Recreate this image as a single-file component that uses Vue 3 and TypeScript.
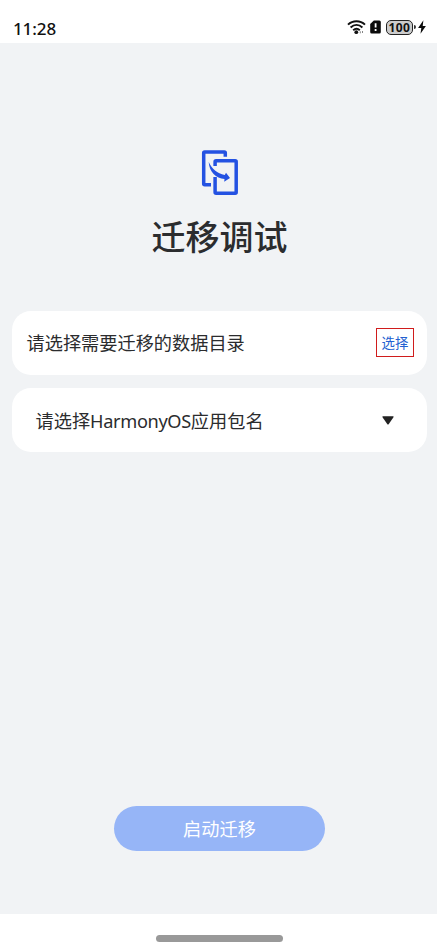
<script setup lang="ts">
import { ref } from 'vue'

const time = ref('11:28')
const battery = ref(100)
</script>

<template>
  <div class="screen">
    <header class="status">
      <span class="time">{{ time }}</span>
      <div class="indicators">
        <svg class="wifi" width="19" height="16" viewBox="0 0 19 16">
          <g fill="none" stroke="#111" stroke-width="2">
            <path d="M1 5.6C5.8 1 13.200 1 18 5.600" />
            <path d="M3.600 8.500C7.200 5.200 11.800 5.200 15.400 8.500" />
            <path d="M6.200 11.200C8.300 9.400 10.700 9.400 12.800 11.200" />
          </g>
          <circle cx="9.300" cy="13.200" r="1.900" fill="#111" />
          <path d="M13.300 12.300v2M15.500 12v2" stroke="#777" stroke-width="0.900" />
        </svg>
        <svg class="sim" width="11" height="14" viewBox="0 0 11 14">
          <path d="M3.800 .5H9.300Q10.800.5 10.800 2V12Q10.800 13.500 9.300 13.500H1.700Q.2 13.500.2 12V4Z" fill="#0b0b0b" />
          <path d="M5.600 3.200V7.600M5.600 9.100V10.900" stroke="#fff" stroke-width="1.800" />
        </svg>
        <span class="battery">{{ battery }}</span>
        <i class="nub"></i>
        <svg class="bolt" width="8" height="14" viewBox="0 0 8 14">
          <path d="M5.400.3.100 7.900H3.300L2.500 13.700 7.900 5.900H4.700Z" fill="#0b0b0b" />
        </svg>
      </div>
    </header>

    <main class="content">
      <svg class="logo" width="40" height="50" viewBox="0 0 40 50">
        <g fill="none" stroke="#2452e2" stroke-width="3.500">
          <path d="M25.300 8.800V4.900Q25.300 3.900 24.300 3.900H4.700Q3.700 3.900 3.700 4.900V35.800Q3.700 36.800 4.700 36.800H11" />
          <path d="M15.100 18V13.800Q15.100 12.800 16.100 12.800H35.200Q36.200 12.800 36.200 13.800V44.200Q36.200 45.200 35.200 45.200H16.100Q15.100 45.200 15.100 44.200V29" />
        </g>
        <path d="M8.700 14C12 20.800 17 25.500 24.800 27.100L26 24.700 30 29.900 24.200 33.800 24.500 31.100C16 30.300 9.200 24 8.700 14Z" fill="#2452e2" />
      </svg>
      <h1 class="title">迁移调试</h1>
      <section class="card">
        <span class="label">请选择需要迁移的数据目录</span>
        <button class="pick" type="button">选择</button>
      </section>
      <section class="card dropdown">
        <span class="label">请选择<span class="latin">HarmonyOS</span>应用包名</span>
        <svg class="caret" width="12" height="9" viewBox="0 0 12 9">
          <path d="M1 .3H11Q12.200 .3 11.500 1.300L6.800 8Q6 9 5.200 8L.5 1.300Q-.2 .3 1 .3Z" fill="#222" />
        </svg>
      </section>
      <button class="start" type="button">启动迁移</button>
    </main>

    <footer class="nav"><i class="handle"></i></footer>
  </div>
</template>

<style>
body {
  margin: 0;
}
</style>

<style scoped>
.screen {
  display: flex;
  flex-direction: column;
  width: 437px;
  height: 948px;
  background: #fff;
  color: #2b2c2e;
  font-family: "Noto Sans", "Noto Sans CJK SC", sans-serif;
}
.status {
  display: flex;
  justify-content: space-between;
  box-sizing: border-box;
  height: 43px;
  padding: 18px 11px 0 13px;
}
.time {
  font: 500 17px/22px "Noto Sans", sans-serif;
  letter-spacing: -0.1px;
  color: #111;
}
.indicators {
  display: flex;
  align-items: center;
  height: 18px;
}
.sim {
  margin-left: 4px;
}
.battery {
  box-sizing: border-box;
  width: 27px;
  height: 15px;
  margin-left: 5px;
  border: 1.5px solid #222;
  border-radius: 5px;
  background: #ccc;
  color: #111;
  font: 700 12px/13px "Noto Sans", sans-serif;
  letter-spacing: 0.4px;
  text-align: center;
}
.nub {
  width: 2px;
  height: 4px;
  margin-left: 1px;
  border-radius: 0 2px 2px 0;
  background: #333;
}
.bolt {
  margin-left: 2px;
}
.content {
  display: flex;
  flex-direction: column;
  align-items: center;
  box-sizing: border-box;
  height: 871px;
  padding: 105px 10px 63px 12px;
  background: #f1f3f5;
}
.logo {
  flex: none;
}
.title {
  margin: 14px 0 49px;
  font-size: 34px;
  font-weight: 500;
  line-height: 50px;
}
.card {
  display: flex;
  align-items: center;
  justify-content: space-between;
  box-sizing: border-box;
  width: 100%;
  height: 64px;
  padding: 0 13px 0 14.5px;
  border-radius: 19px;
  background: #fff;
}
.dropdown {
  margin-top: 13px;
  padding: 0 33px 0 23.5px;
}
.label {
  font-size: 18.2px;
  line-height: 26px;
}
.dropdown .label {
  padding-top: 1px;
}
.latin {
  letter-spacing: -0.35px;
}
.caret {
  margin-top: 1px;
}
.pick {
  box-sizing: border-box;
  width: 38px;
  height: 29px;
  margin-bottom: 2px;
  padding: 0;
  border: 1px solid #d01c1c;
  background: none;
  color: #2260d0;
  font: 400 13.4px/27px "Noto Sans CJK SC", sans-serif;
}
.start {
  width: 211px;
  height: 45px;
  margin-top: auto;
  padding: 0 0 1px;
  border: 0;
  border-radius: 23px;
  background: #96b5f7;
  color: #fff;
  font: 400 18.2px/44px "Noto Sans CJK SC", sans-serif;
}
.nav {
  display: flex;
  justify-content: center;
  padding: 21px 0 0 2px;
}
.handle {
  width: 127px;
  height: 7px;
  border-radius: 4px;
  background: #999;
}
</style>
